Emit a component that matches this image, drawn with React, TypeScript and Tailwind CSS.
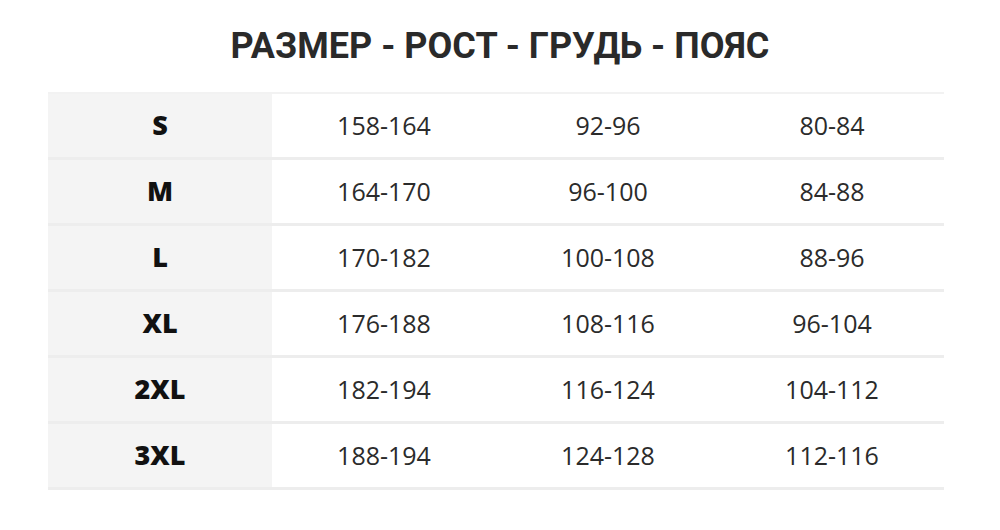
import React from "react";

const rows = [
  ["S", "158-164", "92-96", "80-84"],
  ["M", "164-170", "96-100", "84-88"],
  ["L", "170-182", "100-108", "88-96"],
  ["XL", "176-188", "108-116", "96-104"],
  ["2XL", "182-194", "116-124", "104-112"],
  ["3XL", "188-194", "124-128", "112-116"],
];

export default function App() {
  return (
    <div className="w-[1000px] h-[530px] bg-white overflow-hidden">
      <h1
        className="pt-[24px] text-center text-[36px] leading-[44px] font-bold text-[#2a2a2a]"
        style={{ fontFamily: "Roboto, sans-serif" }}
      >
        РАЗМЕР - РОСТ - ГРУДЬ - ПОЯС
      </h1>

      <div
        className="ml-[48px] mt-[24px] w-[896px] border-t-2 border-[#f2f2f2]"
        style={{ fontFamily: "'Open Sans', sans-serif" }}
      >
        {rows.map((r) => (
          <div
            key={r[0]}
            className="grid grid-cols-4 h-[66px] border-b-[3px] border-[#ededed]"
          >
            <div className="bg-[#f4f4f4] flex items-center justify-center text-[27px] font-extrabold text-[#111111]">
              {r[0]}
            </div>
            {r.slice(1).map((v, i) => (
              <div
                key={i}
                className="flex items-center justify-center text-[25px] text-[#2b2b2b]"
              >
                {v}
              </div>
            ))}
          </div>
        ))}
      </div>
    </div>
  );
}
